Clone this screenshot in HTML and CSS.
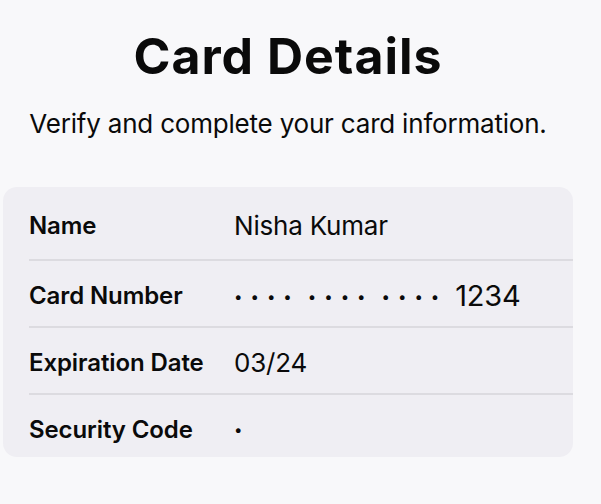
FILE: index.html
```html
<!DOCTYPE html>
<html>
<head>
<meta charset="utf-8">
<title>Card Details</title>
<link rel="stylesheet" href="styles.css">
</head>
<body>
<div class="page">
  <h1 class="title">Card Details</h1>
  <p class="subtitle">Verify and complete your card information.</p>
  <div class="card">
    <div class="row row-first">
      <span class="label">Name</span>
      <span class="value">Nisha Kumar</span>
    </div>
    <div class="row">
      <span class="label">Card Number</span>
      <span class="value"><span class="dots">••••</span><span class="dots">••••</span><span class="dots">••••</span><span class="digits">1234</span></span>
    </div>
    <div class="row">
      <span class="label">Expiration Date</span>
      <span class="value">03/24</span>
    </div>
    <div class="row row-last">
      <span class="label">Security Code</span>
      <span class="value"><span class="dots">•</span></span>
    </div>
  </div>
</div>
</body>
</html>
```

FILE: styles.css
```css
body {
  margin: 0;
  background-color: #f8f8fa;
  font-family: Inter, "Liberation Sans", sans-serif;
  color: #0a0a0a;
}
.page {
  width: 570px;
  margin-left: 3px;
  padding-top: 27px;
}
.title {
  margin: 0;
  text-align: center;
  font-size: 50px;
  font-weight: 700;
  letter-spacing: 1px;
  line-height: 58px;
}
.subtitle {
  margin: 23px 0 0 0;
  text-align: center;
  font-size: 26px;
  line-height: 32px;
  letter-spacing: -0.2px;
}
.card {
  margin-top: 47px;
  background-color: #efeef3;
  border-radius: 14px;
}
.row {
  box-sizing: border-box;
  display: flex;
  align-items: center;
  height: 67px;
  padding-top: 3px;
  margin-left: 26px;
  border-bottom: 2px solid #dcdbe0;
}
.row-first {
  height: 74px;
  padding-top: 4px;
}
.row-last {
  height: 62px;
  padding-top: 6px;
  border-bottom: none;
}
.label {
  width: 205px;
  font-size: 24px;
  font-weight: 600;
  letter-spacing: -0.1px;
}
.value {
  font-size: 26px;
  letter-spacing: -0.2px;
}
.dots {
  font-size: 15px;
  letter-spacing: 8px;
  margin-right: 8px;
  vertical-align: 4px;
}
.digits {
  font-size: 29px;
}
```
